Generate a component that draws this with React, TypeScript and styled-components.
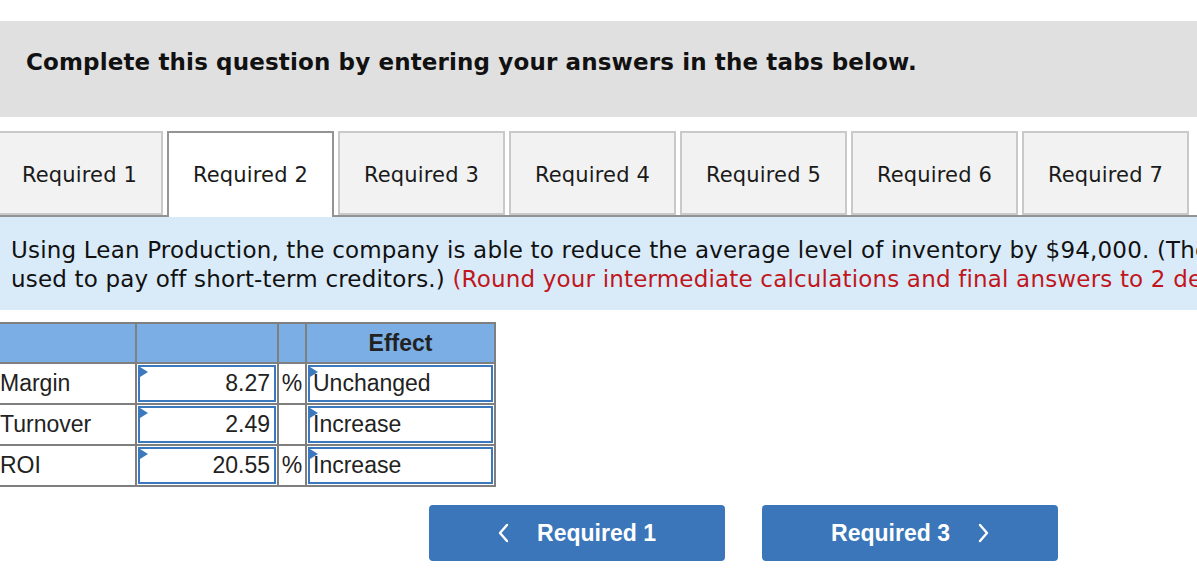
import styled, { createGlobalStyle } from "styled-components";

const GlobalStyle = createGlobalStyle`
  html, body {
    margin: 0;
    padding: 0;
    background: #ffffff;
    overflow: hidden;
  }
  body {
    font-family: "DejaVu Sans", Verdana, sans-serif;
    color: #111;
  }
`;

const tabs = ["Required 1", "Required 2", "Required 3", "Required 4", "Required 5", "Required 6", "Required 7"];

const rows = [
  { label: "Margin", value: "8.27", unit: "%", effect: "Unchanged" },
  { label: "Turnover", value: "2.49", unit: "", effect: "Increase" },
  { label: "ROI", value: "20.55", unit: "%", effect: "Increase" },
];

export default function App() {
  return (
    <Page>
      <GlobalStyle />
      <Banner>
        <BannerTitle>Complete this question by entering your answers in the tabs below.</BannerTitle>
      </Banner>

      <TabList>
        {tabs.map((t, i) => (
          <Tab key={t} $active={i === 1}>
            {t}
          </Tab>
        ))}
      </TabList>

      <InfoPanel>
        <InfoLine>
          Using Lean Production, the company is able to reduce the average level of inventory by $94,000. (The released funds are
        </InfoLine>
        <InfoLine>
          used to pay off short-term creditors.){" "}
          <Hint>(Round your intermediate calculations and final answers to 2 decimal places.)</Hint>
        </InfoLine>
      </InfoPanel>

      <Grid>
        <HeadCell />
        <HeadCell />
        <HeadCell />
        <HeadCell>Effect</HeadCell>
        {rows.map((r) => (
          <Row key={r.label} r={r} />
        ))}
      </Grid>

      <NavRow>
        <NavButton>
          <Chevron dir="left" />
          <span>Required 1</span>
        </NavButton>
        <NavButton>
          <span>Required 3</span>
          <Chevron dir="right" />
        </NavButton>
      </NavRow>
    </Page>
  );
}

const Row = ({ r }: { r: { label: string; value: string; unit: string; effect: string } }) => (
  <>
    <LabelCell>{r.label}</LabelCell>
    <InputCell>
      <InputBox $align="right">
        <Flag />
        {r.value}
      </InputBox>
    </InputCell>
    <UnitCell>{r.unit}</UnitCell>
    <InputCell>
      <InputBox $align="left">
        <Flag />
        {r.effect}
      </InputBox>
    </InputCell>
  </>
);

const Chevron = ({ dir }: { dir: "left" | "right" }) => (
  <svg width="12" height="20" viewBox="0 0 12 20">
    <polyline
      points={dir === "left" ? "9,2 2,10 9,18" : "3,2 10,10 3,18"}
      fill="none"
      stroke="#fff"
      strokeWidth="2.4"
      strokeLinecap="round"
      strokeLinejoin="round"
    />
  </svg>
);

const Page = styled.div`
  width: 1487px;
  padding-top: 21px;
`;

const Banner = styled.div`
  box-sizing: border-box;
  height: 96px;
  background: #e0e0e0;
  padding: 28px 0 0 26px;
`;

const BannerTitle = styled.h1`
  margin: 0;
  font-size: 23px;
  line-height: 27px;
  letter-spacing: 0.14px;
  font-weight: bold;
  color: #111;
  white-space: nowrap;
`;

const TabList = styled.div`
  display: flex;
  gap: 4px;
  margin-top: 14px;
  margin-left: -4px;
  border-bottom: 2px solid #939393;
  height: 84px;
`;

const Tab = styled.div<{ $active?: boolean }>`
  box-sizing: border-box;
  width: 167px;
  height: ${(p) => (p.$active ? "86px" : "84px")};
  display: flex;
  justify-content: center;
  padding-top: 30px;
  font-size: 21px;
  letter-spacing: 0.15px;
  color: #1a1a1a;
  background: ${(p) => (p.$active ? "#ffffff" : "#f2f2f2")};
  border: 2px solid ${(p) => (p.$active ? "#949494" : "#c9c9c9")};
  border-bottom: ${(p) => (p.$active ? "none" : "2px solid #c9c9c9")};
  position: relative;
  z-index: ${(p) => (p.$active ? 1 : 0)};
`;

const InfoPanel = styled.div`
  background: #d9ebf9;
  padding: 19px 0 16px 11px;
  font-size: 23px;
  line-height: 29px;
  letter-spacing: 0.18px;
  color: #111;
`;

const InfoLine = styled.div`
  white-space: nowrap;
`;

const Hint = styled.span`
  color: #c0161c;
`;

const Grid = styled.div`
  display: grid;
  grid-template-columns: 137px 140px 26px 187px;
  grid-template-rows: 38px 39px 39px 39px;
  gap: 2px;
  padding: 2px;
  width: max-content;
  background: #7f7f7f;
  margin-top: 12px;
  margin-left: -4px;
  font-family: "Liberation Sans", Arial, sans-serif;
  font-size: 23px;
  color: #222;
`;

const HeadCell = styled.div`
  background: #7aaee4;
  display: flex;
  align-items: center;
  justify-content: center;
  font-weight: bold;
`;

const LabelCell = styled.div`
  background: #fff;
  display: flex;
  align-items: center;
  padding-left: 2px;
`;

const InputCell = styled.div`
  background: #fff;
  padding: 1px;
  display: flex;
`;

const InputBox = styled.div<{ $align: "left" | "right" }>`
  position: relative;
  flex: 1;
  border: 2px solid #3b78bd;
  display: flex;
  align-items: center;
  justify-content: ${(p) => (p.$align === "right" ? "flex-end" : "flex-start")};
  padding: ${(p) => (p.$align === "right" ? "0 4px 0 0" : "0 0 0 3px")};
`;

const Flag = styled.span`
  position: absolute;
  top: 0;
  left: 0;
  width: 0;
  height: 0;
  border-top: 5px solid transparent;
  border-bottom: 5px solid transparent;
  border-left: 8px solid #3b78bd;
`;

const UnitCell = styled.div`
  background: #fff;
  display: flex;
  align-items: center;
  justify-content: center;
`;

const NavRow = styled.div`
  display: flex;
  justify-content: center;
  gap: 37px;
  margin-top: 18px;
`;

const NavButton = styled.button`
  width: 296px;
  height: 56px;
  border: none;
  border-radius: 4px;
  background: #3a76b9;
  color: #fff;
  font-family: "Liberation Sans", Arial, sans-serif;
  font-weight: bold;
  font-size: 23px;
  display: flex;
  align-items: center;
  justify-content: center;
  gap: 27px;
  cursor: pointer;
`;
